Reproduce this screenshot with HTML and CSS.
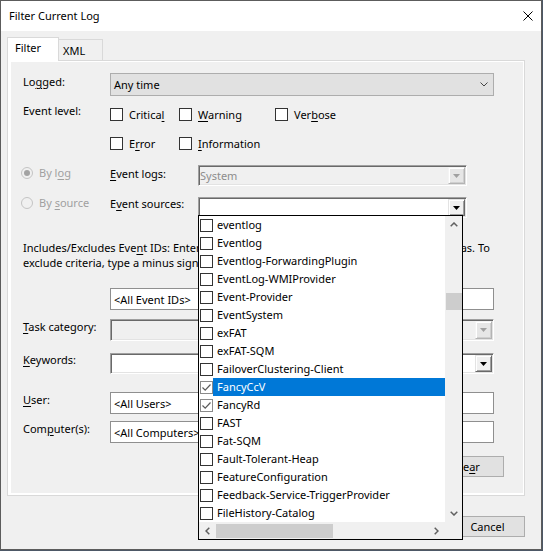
FILE: index.html
```html
<!DOCTYPE html>
<html>
<head>
<meta charset="utf-8">
<link rel="stylesheet" href="styles.css">
</head>
<body>
<div class="dialog">
  <div class="titlebar">
    <span class="title">Filter Current Log</span>
    <svg class="close" width="10" height="10" viewBox="0 0 10 10"><path d="M0.5 0.5 L9.5 9.5 M9.5 0.5 L0.5 9.5" stroke="#000" stroke-width="1" fill="none"/></svg>
  </div>
  <div class="tabs">
    <div class="tab tab-active">Filter</div>
    <div class="tab tab-xml">XML</div>
  </div>
  <div class="panel">
    <div class="page">
      <div class="row r-logged">
        <span class="lbl">Lo<u>g</u>ged:</span>
        <div class="select"><span>Any time</span><svg width="8" height="5" viewBox="0 0 8 5"><path d="M0.5 0.5 L4 4 L7.5 0.5" fill="none" stroke="#444" stroke-width="1"/></svg></div>
      </div>
      <div class="row r-level">
        <span class="lbl">Event level:</span>
        <div class="levels">
          <span class="opt"><span class="cb"></span><span>Critica<u>l</u></span></span>
          <span class="opt"><span class="cb"></span><span><u>W</u>arning</span></span>
          <span class="opt"><span class="cb"></span><span>Ver<u>b</u>ose</span></span>
          <span class="opt"><span class="cb"></span><span>E<u>r</u>ror</span></span>
          <span class="opt"><span class="cb"></span><span><u>I</u>nformation</span></span>
        </div>
      </div>
      <div class="row3 r-bylog">
        <span class="radio-opt"><span class="radio radio-on"></span><span>By l<u>o</u>g</span></span>
        <span class="lbl"><u>E</u>vent logs:</span>
        <div class="combo combo-off"><span class="ctext">System</span><span class="dd dd-off"><svg width="7" height="4" viewBox="0 0 7 4"><path d="M0 0 H7 L3.5 4 Z" fill="#a0a0a0"/></svg></span></div>
      </div>
      <div class="row3 r-bysource">
        <span class="radio-opt"><span class="radio"></span><span>By <u>s</u>ource</span></span>
        <span class="lbl">E<u>v</u>ent sources:</span>
        <div class="combo"><span class="ctext"></span><span class="dd"><svg width="7" height="4" viewBox="0 0 7 4"><path d="M0 0 H7 L3.5 4 Z" fill="#000"/></svg></span></div>
      </div>
      <div class="hint">
        <span class="hline">Includes/Excludes Eve<u>n</u>t IDs: Enter ID numbers and/or ID ranges separated by commas. To</span>
        <span class="hline">exclude criteria, type a minus sign first. For example 1,3,5-99,-76</span>
      </div>
      <div class="row r-ids">
        <span></span>
        <div class="input">&lt;All Event IDs&gt;</div>
      </div>
      <div class="row r-task">
        <span class="lbl"><u>T</u>ask category:</span>
        <div class="combo combo-off"><span class="ctext"></span><span class="dd dd-off"><svg width="7" height="4" viewBox="0 0 7 4"><path d="M0 0 H7 L3.5 4 Z" fill="#a0a0a0"/></svg></span></div>
      </div>
      <div class="row r-keys">
        <span class="lbl"><u>K</u>eywords:</span>
        <div class="combo"><span class="ctext"></span><span class="dd"><svg width="7" height="4" viewBox="0 0 7 4"><path d="M0 0 H7 L3.5 4 Z" fill="#000"/></svg></span></div>
      </div>
      <div class="row r-user">
        <span class="lbl"><u>U</u>ser:</span>
        <div class="input">&lt;All Users&gt;</div>
      </div>
      <div class="row r-comp">
        <span class="lbl">Com<u>p</u>uter(s):</span>
        <div class="input">&lt;All Computers&gt;</div>
      </div>
      <div class="clear-row"><span class="btn"><span>Cle<u>a</u>r</span></span></div>
    </div>
  </div>
  <div class="footer">
    <span class="btn">OK</span>
    <span class="btn">Cancel</span>
  </div>
</div>

<div class="droplist">
  <div class="items">
    <div class="item"><span class="cb"></span><span class="itxt">eventlog</span></div>
    <div class="item"><span class="cb"></span><span class="itxt">Eventlog</span></div>
    <div class="item"><span class="cb"></span><span class="itxt">Eventlog-ForwardingPlugin</span></div>
    <div class="item"><span class="cb"></span><span class="itxt">EventLog-WMIProvider</span></div>
    <div class="item"><span class="cb"></span><span class="itxt">Event-Provider</span></div>
    <div class="item"><span class="cb"></span><span class="itxt">EventSystem</span></div>
    <div class="item"><span class="cb"></span><span class="itxt">exFAT</span></div>
    <div class="item"><span class="cb"></span><span class="itxt">exFAT-SQM</span></div>
    <div class="item"><span class="cb"></span><span class="itxt">FailoverClustering-Client</span></div>
    <div class="item item-sel"><span class="cb cb-on"><svg width="11" height="11" viewBox="0 0 11 11"><path d="M1.5 5.5 L4.2 8.2 L9.5 2.5" fill="none" stroke="#5a5a5a" stroke-width="1.2"/></svg></span><span class="itxt">FancyCcV</span></div>
    <div class="item"><span class="cb cb-on"><svg width="11" height="11" viewBox="0 0 11 11"><path d="M1.5 5.5 L4.2 8.2 L9.5 2.5" fill="none" stroke="#5a5a5a" stroke-width="1.2"/></svg></span><span class="itxt">FancyRd</span></div>
    <div class="item"><span class="cb"></span><span class="itxt">FAST</span></div>
    <div class="item"><span class="cb"></span><span class="itxt">Fat-SQM</span></div>
    <div class="item"><span class="cb"></span><span class="itxt">Fault-Tolerant-Heap</span></div>
    <div class="item"><span class="cb"></span><span class="itxt">FeatureConfiguration</span></div>
    <div class="item"><span class="cb"></span><span class="itxt">Feedback-Service-TriggerProvider</span></div>
    <div class="item"><span class="cb"></span><span class="itxt">FileHistory-Catalog</span></div>
  </div>
  <div class="vscroll">
    <span class="arr"><svg width="8" height="5" viewBox="0 0 8 5"><path d="M0.7 4.3 L4 1 L7.3 4.3" fill="none" stroke="#606060" stroke-width="1.5"/></svg></span>
    <span class="vtrack"><span class="vthumb"></span></span>
    <span class="arr"><svg width="8" height="5" viewBox="0 0 8 5"><path d="M0.7 0.7 L4 4 L7.3 0.7" fill="none" stroke="#606060" stroke-width="1.5"/></svg></span>
  </div>
  <div class="hscroll">
    <span class="harr"><svg width="5" height="8" viewBox="0 0 5 8"><path d="M4.3 0.7 L1 4 L4.3 7.3" fill="none" stroke="#606060" stroke-width="1.5"/></svg></span>
    <span class="htrack"><span class="hthumb"></span></span>
    <span class="harr"><svg width="5" height="8" viewBox="0 0 5 8"><path d="M0.7 0.7 L4 4 L0.7 7.3" fill="none" stroke="#606060" stroke-width="1.5"/></svg></span>
  </div>
  <div class="corner"></div>
</div>
</body>
</html>
```

FILE: styles.css
```css
* { box-sizing: border-box; }
html, body { margin: 0; padding: 0; }
body {
  width: 543px;
  height: 551px;
  overflow: hidden;
  position: relative;
  background: #4d5866;
  font-family: "Noto Sans", "DejaVu Sans", sans-serif;
  font-size: 11px;
  color: #000;
}
u { text-decoration: underline; text-decoration-thickness: 1px; text-underline-offset: 2px; }

.dialog {
  width: 542px;
  height: 550px;
  border: 1px solid #5c5c5c;
  background: #f0f0f0;
  display: flex;
  flex-direction: column;
}
.titlebar {
  flex: none;
  height: 30px;
  background: #fff;
  display: flex;
  align-items: center;
  justify-content: space-between;
  padding: 0 8px 0 8px;
}
.title { font-size: 11px; line-height: 16px; }
.close { display: block; }

.tabs {
  flex: none;
  display: flex;
  align-items: flex-end;
  height: 23px;
  margin: 6px 0 0 6px;
  position: relative;
  z-index: 1;
}
.tab { border: 1px solid #d9d9d9; border-bottom: none; line-height: 16px; }
.tab-active { width: 52px; height: 24px; margin-bottom: -1px; background: #fff; padding: 2px 0 0 7px; }
.tab-xml { width: 44px; height: 21px; border-left: none; background: #f0f0f0; padding: 3px 0 0 4px; }

.panel {
  flex: none;
  width: 518px;
  margin-left: 6px;
  border: 1px solid #d9d9d9;
  background: #fff;
  padding: 1px 1px 2px 3px;
}
.page { background: #f0f0f0; padding: 11px 29px 16px 12px; }

.row { display: grid; grid-template-columns: 87px 1fr; align-items: start; }
.row3 { display: grid; grid-template-columns: 87px 88px 269px; align-items: start; }
.lbl { line-height: 16px; white-space: nowrap; }

.select {
  height: 23px;
  border: 1px solid #adadad;
  background: #e1e1e1;
  display: flex;
  align-items: center;
  justify-content: space-between;
  padding: 0 5px 0 3px;
}
.select svg { display: block; }
.r-logged .lbl { margin-top: 1px; }

.r-level { margin-top: 7px; }
.levels {
  padding-top: 5px;
  display: grid;
  grid-template-columns: 69px 96px auto;
  row-gap: 16px;
}
.opt { display: flex; align-items: center; gap: 6px; height: 13px; line-height: 13px; white-space: nowrap; }
.cb {
  flex: none;
  width: 13px;
  height: 13px;
  border: 1px solid #333;
  background: #fff;
  display: flex;
  align-items: center;
  justify-content: center;
}
.cb-on { border-color: #8a8a8a; }
.cb svg { display: block; }

.radio-opt {
  margin-left: -2px;
  display: flex;
  align-items: center;
  gap: 6px;
  height: 16px;
  line-height: 16px;
  color: #a0a0a0;
  white-space: nowrap;
}
.radio {
  flex: none;
  width: 12px;
  height: 12px;
  border: 1px solid #c4c4c4;
  border-radius: 50%;
  display: flex;
  align-items: center;
  justify-content: center;
}
.radio-on::after {
  content: "";
  width: 6px;
  height: 6px;
  border-radius: 50%;
  background: #a3a3a3;
}
.r-bylog { margin-top: 15px; }
.r-bylog .lbl { margin-top: 1px; }
.r-bysource { margin-top: 11px; }
.r-bysource .radio-opt { margin-top: -2px; }
.r-bysource .lbl { margin-top: -1px; }

.combo {
  height: 21px;
  display: flex;
  align-items: stretch;
  border: 1px solid;
  border-color: #a0a0a0 #fff #fff #a0a0a0;
  box-shadow: inset 1px 1px 0 #696969, inset -1px -1px 0 #e3e3e3;
  padding: 1px;
  background: #fff;
}
.combo-off { background: #f0f0f0; }
.ctext { flex: 1; line-height: 17px; padding-left: 0; color: #000; }
.combo-off .ctext { color: #8d8d8d; }
.dd {
  flex: none;
  width: 17px;
  display: flex;
  align-items: center;
  justify-content: center;
  background: #f0f0f0;
  border: 1px solid;
  border-color: #e3e3e3 #696969 #696969 #e3e3e3;
  box-shadow: inset 1px 1px 0 #fff, inset -1px -1px 0 #a0a0a0;
}
.dd-off { background: #e6e6e6; border-color: #f4f4f4 #b4b4b4 #b4b4b4 #f4f4f4; box-shadow: inset 1px 1px 0 #fff, inset -1px -1px 0 #cfcfcf; }
.dd svg { display: block; }

.hint { margin-top: 22px; line-height: 15px; }
.hline { display: block; white-space: nowrap; }

.input {
  height: 22px;
  border: 1px solid #8f8f8f;
  background: #fff;
  display: flex;
  align-items: center;
  padding-left: 3px;
  white-space: nowrap;
  overflow: hidden;
}
.r-ids { margin-top: 18px; }
.r-task { margin-top: 9px; }
.r-task .combo { height: 22px; }
.r-keys { margin-top: 12px; }
.r-keys .lbl { margin-top: -1px; }
.r-user { margin-top: 18px; }
.r-comp { margin-top: 7px; }

.clear-row { margin: 13px -10px 0 0; display: flex; justify-content: flex-end; }
.btn {
  width: 75px;
  height: 21px;
  border: 1px solid #adadad;
  background: #e1e1e1;
  display: flex;
  align-items: center;
  justify-content: center;
  line-height: 16px;
}

.footer {
  flex: none;
  width: 518px;
  margin: 20px 0 0 6px;
  display: flex;
  justify-content: flex-end;
  gap: 6px;
}

/* dropped-down checked list (overlay) */
.droplist {
  position: absolute;
  left: 198px;
  top: 215px;
  width: 265px;
  height: 325px;
  border: 1px solid #000;
  background: #fff;
  display: grid;
  grid-template-columns: 246px 17px;
  grid-template-rows: 306px 17px;
}
.items { overflow: hidden; }
.item { height: 18px; display: flex; align-items: center; }
.item .cb { margin-left: 1px; }
.itxt { flex: 1; height: 18px; line-height: 17px; padding-left: 4px; white-space: nowrap; }
.item-sel .itxt { background: #0078d7; color: #fff; }

.vscroll { background: #f0f0f0; display: flex; flex-direction: column; }
.arr { flex: none; height: 17px; display: flex; align-items: center; justify-content: center; }
.vtrack { flex: 1; }
.vthumb { display: block; margin: 60px 0 0 1px; width: 16px; height: 17px; background: #cdcdcd; }

.hscroll { background: #f0f0f0; display: flex; }
.harr { flex: none; width: 17px; display: flex; align-items: center; justify-content: center; }
.htrack { flex: 1; }
.hthumb { display: block; margin-top: 2px; width: 117px; height: 14px; background: #cdcdcd; }
.corner { background: #f0f0f0; }
```
